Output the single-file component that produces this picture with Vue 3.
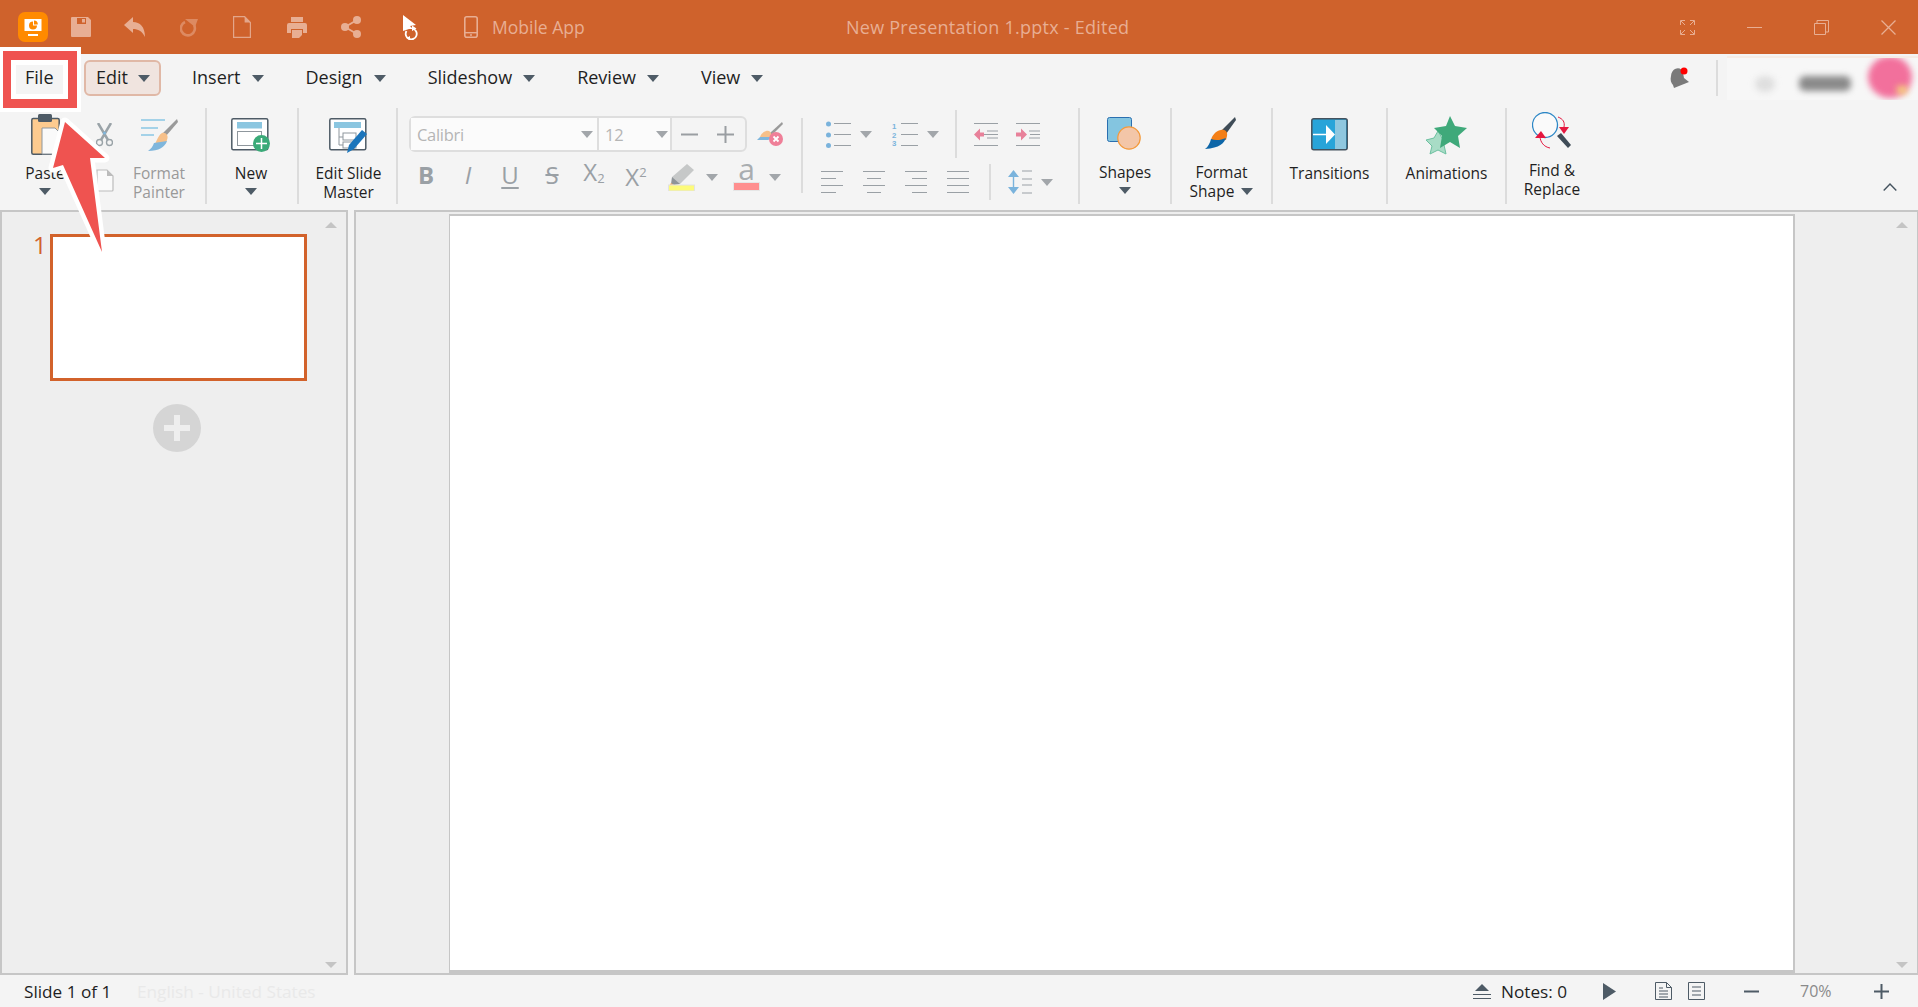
<script setup>
const menus = ['Insert', 'Design', 'Slideshow', 'Review', 'View'];
const aligns = [
  'M0 .5h22M0 7.5h15M0 14.5h22M0 21.5h15',
  'M0 .5h22M4 7.5h14M0 14.5h22M4 21.5h14',
  'M0 .5h22M7 7.5h15M0 14.5h22M7 21.5h15',
  'M0 .5h22M0 7.5h22M0 14.5h22M0 21.5h22'
];
</script>

<template>
  <div class="app">
    <!-- title bar -->
    <header class="titlebar">
      <svg class="t-logo" width="30" height="30" viewBox="0 0 30 30">
        <rect width="30" height="30" rx="7" fill="#ff8a00"/>
        <rect x="6.5" y="7" width="17" height="12" fill="#fff"/>
        <path d="M15 9.5v4h4a4 4 0 1 1-4-4z" fill="#ff8a00"/>
        <path d="M16 8.5a4 4 0 0 1 3.800 4H16z" fill="#ff8a00"/>
        <rect x="10" y="22" width="10" height="2" fill="#fff"/>
      </svg>
      <svg class="t-save" width="20" height="20" viewBox="0 0 20 20">
        <path fill-rule="evenodd" d="M1 0h16l3 3v16a1 1 0 0 1-1 1H1a1 1 0 0 1-1-1V1a1 1 0 0 1 1-1zm5 1v6h9V1z" fill="#e8ae93"/>
        <rect x="11" y="2" width="3" height="3.5" fill="#e8ae93"/>
      </svg>
      <svg class="t-undo" width="21" height="20" viewBox="0 0 21 20">
        <path d="M0 8l9-8v5c7 0 12 5 12 15-3-6-7-8-12-8v4z" fill="#e8ae93"/>
      </svg>
      <svg class="t-redo" width="18" height="20" viewBox="0 0 18 20">
        <path d="M5 5a7 7 0 1 0 9 3" fill="none" stroke="#dd8a62" stroke-width="2.6"/>
        <path d="M5 2h13l-3 8z" fill="#dd8a62"/>
      </svg>
      <svg class="t-new" width="18" height="22" viewBox="0 0 18 22">
        <path d="M.6.6h11l5.800 6v14.800H.6z" fill="none" stroke="#e3a68a" stroke-width="1.2"/>
        <path d="M11.600.6v6h5.800z" fill="#e3a68a"/>
      </svg>
      <svg class="t-print" width="20" height="21" viewBox="0 0 20 21">
        <path d="M4 0h12v5H4zM2 6h16a2 2 0 0 1 2 2v8h-4v-4H4v4H0V8a2 2 0 0 1 2-2zM5 13h10v5l-3 3H5z" fill="#e8ae93"/>
      </svg>
      <svg class="t-share" width="20" height="22" viewBox="0 0 20 22">
        <path d="M16 4L4 11l12 7" fill="none" stroke="#e8ae93" stroke-width="1.8"/>
        <circle cx="16" cy="4" r="4" fill="#e8ae93"/>
        <circle cx="4" cy="11" r="4" fill="#e8ae93"/>
        <circle cx="16" cy="18" r="4" fill="#e8ae93"/>
      </svg>
      <svg class="t-cursor" width="17" height="25" viewBox="0 0 17 25">
        <path d="M0 0l13 10-6 1 3 3-4 0-6 2z" fill="#fff"/>
        <path d="M3.500 16a5.500 5.500 0 1 0 6-2.500" fill="none" stroke="#fff" stroke-width="1.8"/>
        <path d="M9 10.500l4.500 3-4.500 2.500zM7 25l-3.500-2 3.500-2z" fill="#fff"/>
      </svg>
      <svg class="t-phone" width="14" height="22" viewBox="0 0 14 22">
        <rect x=".8" y=".8" width="12.4" height="20.4" rx="2" fill="none" stroke="#e8ae93" stroke-width="1.6"/>
        <rect x="1" y="16" width="12" height="1.4" fill="#e8ae93"/>
        <circle cx="7" cy="19" r="1" fill="#e8ae93"/>
      </svg>
      <span class="t-mobile">Mobile App</span>
      <span class="t-title">New Presentation 1.pptx - Edited</span>
      <div class="win-btns">
        <svg class="w-full" width="15" height="15" viewBox="0 0 15 15" fill="none" stroke="#e8ae93">
          <path d="M.5 5V.5H5M10 .5h4.500V5M14.500 10v4.500H10M5 14.500H.5V10M1 1l4 4M14 1l-4 4M14 14l-4-4M1 14l4-4"/>
        </svg>
        <svg class="w-min" width="15" height="15" viewBox="0 0 15 15" fill="none" stroke="#e8ae93">
          <path d="M0 7.5h15"/>
        </svg>
        <svg class="w-max" width="15" height="15" viewBox="0 0 15 15" fill="none" stroke="#e8ae93">
          <path d="M.5 3.500h11v11H.5zM3 3V.5h11.500V12H12"/>
        </svg>
        <svg class="w-close" width="15" height="15" viewBox="0 0 15 15" fill="none" stroke="#e8ae93" stroke-width="1.3">
          <path d="M.5.5l14 14M14.500.5l-14 14"/>
        </svg>
      </div>
    </header>

    <!-- menu row -->
    <nav class="menubar">
      <span class="menu-file">File</span>
      <div class="menu-edit">
        <span>Edit</span>
        <i class="caret"></i>
      </div>
      <div v-for="m in menus" :key="m" class="menu-item">
        <span>{{ m }}</span>
        <i class="caret"></i>
      </div>
      <svg class="bell" width="20" height="22" viewBox="0 0 20 22">
        <path d="M5 2c4-2 7 0 8 4l1 5 5 4-15 6-1-3C1 16 0 13 1 9c0-3 2-6 4-7z" fill="#7a7a7a"/>
        <circle cx="14" cy="4" r="3.5" fill="#f00"/>
      </svg>
      <div class="user-sep"></div>
      <div class="user-blur">
        <div class="blur-a"></div>
        <div class="blur-b"></div>
        <div class="blur-avatar"></div>
        <div class="blur-dot"></div>
      </div>
    </nav>

    <!-- ribbon -->
    <section class="ribbon">
      <div class="g-clip">
        <div class="big w-paste">
          <div class="big-ico ico-paste">
            <svg width="29" height="42" viewBox="0 0 29 42">
              <rect x=".8" y="5.5" width="27.4" height="35.7" rx="1.5" fill="#fdcb8f" stroke="#4e5b66" stroke-width="1.5"/>
              <rect x="7" y="1" width="14" height="8" rx="1.5" fill="#4e5b66"/>
              <path d="M11 15h13l4 4v22H11z" fill="#fafafa" stroke="#8f979d"/>
            </svg>
          </div>
          <span class="lbl">Paste</span>
          <i class="caret big-caret"></i>
        </div>
        <div class="small-col">
          <svg class="ico-scissors" width="17" height="24" viewBox="0 0 17 24" fill="none">
            <path d="M2 0l10 17M15 0L5 17" stroke="#9aa3a8" stroke-width="2.5"/>
            <circle cx="3.5" cy="19.5" r="3" stroke="#9aa3a8" stroke-width="1.4"/>
            <circle cx="13.5" cy="19.5" r="3" stroke="#9aa3a8" stroke-width="1.4"/>
            <circle cx="8.5" cy="10" r="1.5" fill="#7fb6dc"/>
          </svg>
          <svg class="ico-copy" width="18" height="23" viewBox="0 0 18 23">
            <path d="M1 1h10l6 6v14a1 1 0 0 1-1 1H1z" fill="#fafafa" stroke="#bcbcbc" stroke-width="1.2"/>
            <path d="M11 1v6h6z" fill="#bcbcbc"/>
          </svg>
        </div>
        <div class="big w-paste muted">
          <div class="big-ico">
            <svg width="37" height="35" viewBox="0 0 37 35">
              <path d="M0 2h24M0 10h17M0 17h13" stroke="#89c6e4" stroke-width="1.5"/>
              <path d="M36 1l-14 14 3 3L37 4z" fill="#9a9a9a"/>
              <path d="M21 15c4-1 7 3 5 7-1 4-6 6-10 6H12c4-3 4-10 9-13z" fill="#f6c08a"/>
              <path d="M13 25l13-2c-2 6-8 10-19 10 3-2 5-5 6-8z" fill="#7fb6dc"/>
            </svg>
          </div>
          <span class="lbl">Format</span>
          <span class="lbl">Painter</span>
        </div>
      </div>
      <div class="rsep"></div>

      <div class="big w-new">
        <div class="big-ico">
          <svg width="40" height="34" viewBox="0 0 40 34">
            <rect x=".8" y=".8" width="36" height="31" rx="1.5" fill="#fff" stroke="#4e5b66" stroke-width="1.5"/>
            <rect x="6" y="4" width="25" height="6.5" fill="#8bc6e0"/>
            <rect x="6.5" y="13.5" width="24" height="14" fill="#fff" stroke="#8f979d"/>
            <circle cx="30.5" cy="25.5" r="8.5" fill="#3aaa78"/>
            <path d="M30.500 20v11M25 25.500h11" stroke="#fff" stroke-width="1.5"/>
          </svg>
        </div>
        <span class="lbl">New</span>
        <i class="caret big-caret"></i>
      </div>
      <div class="rsep"></div>

      <div class="big w-master">
        <div class="big-ico">
          <svg width="39" height="35" viewBox="0 0 39 35">
            <rect x=".8" y=".8" width="36" height="31" rx="1.5" fill="#fff" stroke="#4e5b66" stroke-width="1.5"/>
            <rect x="5" y="4" width="27" height="6" fill="#8bc6e0"/>
            <path d="M10 10v17h4M10 19h4" fill="none" stroke="#8f979d"/>
            <rect x="14" y="15" width="13" height="7" fill="#fff" stroke="#8f979d"/>
            <rect x="14" y="24" width="13" height="6" fill="#fff" stroke="#8f979d"/>
            <path d="M33 12l5 4-13 15-7 4 2-8z" fill="#1b75bb"/>
          </svg>
        </div>
        <span class="lbl">Edit Slide</span>
        <span class="lbl">Master</span>
      </div>
      <div class="rsep"></div>

      <div class="g-font">
        <div class="font-row1">
          <div class="font-box">
            <div class="f-name">
              <span>Calibri</span>
              <i class="caret grey"></i>
            </div>
            <div class="f-size">
              <span>12</span>
              <i class="caret grey"></i>
            </div>
            <div class="f-step">
              <svg width="17" height="17" viewBox="0 0 17 17"><path d="M0 8.500h17" stroke="#9a9ea2" stroke-width="2"/></svg>
              <svg width="17" height="17" viewBox="0 0 17 17"><path d="M0 8.500h17M8.500 0v17" stroke="#9a9ea2" stroke-width="2"/></svg>
            </div>
          </div>
          <svg class="ico-clear" width="26" height="24" viewBox="0 0 26 24">
            <path d="M25 0L13 11l2 2L26 2z" fill="#9a9a9a"/>
            <path d="M9 9c4-1 6 2 5 6H3c1-3 3-5 6-6z" fill="#f6c08a"/>
            <path d="M3 15h11c-1 2-2 3-3 3H0c1-1 2-2 3-3z" fill="#7fb6dc"/>
            <circle cx="19" cy="17" r="7" fill="#ef7f98"/>
            <path d="M16.500 14.500l5 5M21.500 14.500l-5 5" stroke="#fff" stroke-width="1.8"/>
          </svg>
        </div>
        <div class="font-row2">
          <span class="fmt bold">B</span>
          <span class="fmt ital">I</span>
          <span class="fmt under">U</span>
          <span class="fmt strike">S</span>
          <span class="fmt">X<small class="sub">2</small></span>
          <span class="fmt">X<small class="sup">2</small></span>
          <svg class="ico-hl" width="27" height="27" viewBox="0 0 27 27">
            <path d="M19 0l7 6-14 14-8 0 0-7z" fill="#c6c8c8"/>
            <path d="M4 13l8 7-6 1-3-1z" fill="#8e9498"/>
            <path d="M3 19l3 2-5 1z" fill="#f6b26b"/>
            <rect x=".5" y="21" width="26" height="6" fill="#fdfb7a" stroke="#e2e2e2"/>
          </svg>
          <i class="caret grey c-hl"></i>
          <span class="font-a">
            <span class="font-a-ch">a</span>
            <i class="font-a-bar"></i>
          </span>
          <i class="caret grey c-a"></i>
        </div>
      </div>
      <div class="rsep short"></div>

      <div class="g-para">
        <div class="para-row1">
          <svg class="ico-bul" width="25" height="27" viewBox="0 0 25 27">
            <g fill="#7ab3dc"><circle cx="2.5" cy="3" r="2.5"/><circle cx="2.5" cy="14" r="2.5"/><circle cx="2.5" cy="24.500" r="2.5"/></g>
            <path d="M8 2.500h17M8 13.500h17M8 24.500h17" stroke="#9aa0a5" stroke-width="1.2"/>
          </svg>
          <i class="caret grey c-list"></i>
          <svg class="ico-num" width="26" height="27" viewBox="0 0 26 27">
            <g fill="#7ab3dc" font-family="Liberation Sans, sans-serif" font-size="7.8" font-weight="700">
              <text x="0" y="7.5">1</text><text x="0" y="16.6">2</text><text x="0" y="25.2">3</text>
            </g>
            <path d="M9 2.500h17M9 13.500h17M9 24.500h17" stroke="#9aa0a5" stroke-width="1.2"/>
          </svg>
          <i class="caret grey c-list"></i>
          <div class="psep s1"></div>
          <svg class="ico-ind1" width="24" height="23" viewBox="0 0 24 23">
            <path d="M0 .5h24M13 8h11M9 11.500h15M13 15h11M0 22.500h24" stroke="#9aa0a5" stroke-width="1.2" fill="none"/>
            <path d="M0 11.500l6-6v4h4v4H6v4z" fill="#e8819a"/>
          </svg>
          <svg class="ico-ind2" width="24" height="23" viewBox="0 0 24 23">
            <path d="M0 .5h24M13 8h11M13 15h11M0 22.500h24M14 11.500h10" stroke="#9aa0a5" stroke-width="1.2" fill="none"/>
            <path d="M11 11.500l-6-6v4H0v4h5v4z" fill="#e8819a"/>
          </svg>
        </div>
        <div class="para-row2">
          <svg v-for="(d, i) in aligns" :key="i" class="ico-al" width="22" height="22" viewBox="0 0 22 22">
            <path :d="d" stroke="#9aa0a5" stroke-width="1.2"/>
          </svg>
          <div class="psep s2"></div>
          <svg class="ico-sp" width="24" height="24" viewBox="0 0 24 24">
            <path d="M5.500 4v16" stroke="#7ab3dc" stroke-width="1.4"/>
            <path d="M0 7l5.500-7L11 7zM0 17l5.500 7L11 17z" fill="#7ab3dc"/>
            <path d="M14 1h10M14 9h10M14 15h10M14 23h10" stroke="#9aa0a5" stroke-width="1.2"/>
          </svg>
          <i class="caret grey c-list"></i>
        </div>
      </div>
      <div class="rsep"></div>

      <div class="big w-shapes">
        <div class="big-ico ico-shapes">
          <svg width="34" height="33" viewBox="0 0 34 33">
            <rect x=".5" y=".5" width="24" height="24" rx="2" fill="#84c5e0" stroke="#2a6fb0"/>
            <circle cx="22" cy="21" r="11.2" fill="#f3c6a8" stroke="#f39a3c" stroke-width="1.2"/>
          </svg>
        </div>
        <span class="lbl">Shapes</span>
        <i class="caret big-caret"></i>
      </div>
      <div class="rsep"></div>

      <div class="big w-format">
        <div class="big-ico ico-shapes">
          <svg width="31" height="32" viewBox="0 0 31 32">
            <path d="M30 0l-13 13 4 4L31 3z" fill="#3f4c57"/>
            <path d="M16 13c4-1 7 2 6 6l-1 4-15 1c0-4 4-10 10-11z" fill="#f47f16"/>
            <path d="M6 22c5 2 10 1 15-1-2 5-6 10-21 11 3-2 5-6 6-10z" fill="#0d66a8"/>
          </svg>
        </div>
        <span class="lbl">Format</span>
        <div class="lbl-row">
          <span class="lbl">Shape</span>
          <i class="caret"></i>
        </div>
      </div>
      <div class="rsep"></div>

      <div class="big w-trans">
        <div class="big-ico">
          <svg width="37" height="33" viewBox="0 0 37 33">
            <rect x=".8" y=".8" width="35.4" height="31" rx="2" fill="#28a4d9" stroke="#44525e" stroke-width="1.5"/>
            <rect x="24" y="2" width="11" height="29" fill="#8fc7df"/>
            <path d="M2 16.500h14" stroke="#fff" stroke-width="1.5"/>
            <path d="M15 7l9 9.500L15 26z" fill="#fff"/>
          </svg>
        </div>
        <span class="lbl">Transitions</span>
      </div>
      <div class="rsep"></div>

      <div class="big w-anim">
        <div class="big-ico ico-anim">
          <svg width="41" height="40" viewBox="0 0 41 40">
            <path d="M12 15l4 7 8 1-6 6 2 9-8-4-8 4 2-8-6-6 8-2z" fill="#a8dcc6" stroke="#6cc0a0"/>
            <path d="M24 0l5 10 12 2-9 8 2 12-10-6-10 6 2-12-8-8 12-2z" fill="#3fa97a"/>
          </svg>
        </div>
        <span class="lbl">Animations</span>
      </div>
      <div class="rsep"></div>

      <div class="big w-find">
        <div class="big-ico ico-find">
          <svg width="41" height="37" viewBox="0 0 41 37">
            <circle cx="13" cy="13" r="12.5" fill="#fafafa" stroke="#2d87c6" stroke-width="1.3"/>
            <path d="M25 24l4-3 10 12-3 3z" fill="#3f4c57"/>
            <path d="M26 5c5 2 7 5 6 10" fill="none" stroke="#e5173f"/>
            <path d="M27 15h10l-5 7z" fill="#e5173f"/>
            <path d="M8 24c0 6 4 11 10 12" fill="none" stroke="#e5173f"/>
            <path d="M3 26l6-7 5 7z" fill="#e5173f"/>
          </svg>
        </div>
        <span class="lbl">Find &amp;</span>
        <span class="lbl">Replace</span>
      </div>

      <svg class="collapse" width="14" height="8" viewBox="0 0 14 8">
        <path d="M.7 7.500L7 1l6.300 6.500" fill="none" stroke="#44525e" stroke-width="1.4"/>
      </svg>
    </section>

    <!-- slide panes -->
    <main class="panes">
      <aside class="thumbs">
        <i class="scr-up"></i>
        <div class="thumb-row">
          <span class="thumb-no">1</span>
          <div class="thumb"></div>
        </div>
        <div class="add-slide">
          <svg width="26" height="26" viewBox="0 0 26 26">
            <path d="M10 0h6v10h10v6H16v10h-6V16H0v-6h10z" fill="#eee"/>
          </svg>
        </div>
        <i class="scr-down"></i>
      </aside>
      <section class="stage">
        <i class="scr-up"></i>
        <div class="page"></div>
        <i class="scr-down"></i>
      </section>
    </main>

    <!-- status bar -->
    <footer class="statusbar">
      <span class="s-slide">Slide 1 of 1</span>
      <span class="s-lang">English - United States</span>
      <svg class="s-eject" width="18" height="15" viewBox="0 0 18 15">
        <path d="M9 0l7 7H2z" fill="#4e5b66"/>
        <path d="M0 10.500h18M0 14.500h18" stroke="#4e5b66"/>
      </svg>
      <span class="s-notes">Notes: 0</span>
      <svg class="s-play" width="13" height="17" viewBox="0 0 13 17">
        <path d="M0 0l13 8.500L0 17z" fill="#4e5b66"/>
      </svg>
      <svg class="s-doc" width="17" height="18" viewBox="0 0 17 18" fill="none" stroke="#4e5b66">
        <path d="M.5.500h11l5 5v12H.5zM11.500.5v5h5M4 9h9M4 12h9M4 15h9M4 6h4"/>
      </svg>
      <svg class="s-doc2" width="17" height="18" viewBox="0 0 17 18" fill="none" stroke="#4e5b66">
        <path d="M.5.500h16v17H.5zM4 5h9M4 9h9M4 13h9"/>
      </svg>
      <svg class="s-minus" width="15" height="15" viewBox="0 0 15 15">
        <path d="M0 7.500h15" stroke="#4e5b66" stroke-width="2"/>
      </svg>
      <span class="s-zoom">70%</span>
      <svg class="s-plus" width="15" height="15" viewBox="0 0 15 15">
        <path d="M0 7.500h15M7.500 0v15" stroke="#4e5b66" stroke-width="2"/>
      </svg>
    </footer>

    <!-- annotation over the screenshot -->
    <div class="file-mark">
      <div class="file-mark-red">
        <div class="file-mark-white"></div>
      </div>
    </div>
    <svg class="arrow" width="125" height="160" viewBox="0 0 125 160">
      <path d="M25 14L65 50H50L62 144 23 57 13 60z" fill="#ef5350" stroke="#fff" stroke-width="9" stroke-linejoin="round" paint-order="stroke"/>
    </svg>
  </div>
</template>

<style>
html, body {
  margin: 0;
  background: #f4f4f4;
}
</style>

<style scoped>
.app {
  position: relative;
  width: 1918px;
  height: 1007px;
  display: flex;
  flex-direction: column;
  overflow: hidden;
  background: #f4f4f4;
  color: #1f1f1f;
  font-family: "Open Sans", "Noto Sans", sans-serif;
  font-size: 15px;
}

svg {
  display: block;
  flex: none;
}

.caret {
  display: block;
  flex: none;
  width: 0;
  height: 0;
  border-left: 6px solid transparent;
  border-right: 6px solid transparent;
  border-top: 7px solid #4e5b66;
}

.caret.grey {
  border-top-color: #a2a6aa;
}

/* title bar */
.titlebar {
  height: 54px;
  flex: none;
  display: flex;
  align-items: center;
  padding-left: 18px;
  background: #cf622c;
  color: #e8ae93;
}

.t-save { margin-left: 23px; }
.t-undo { margin-left: 33px; }
.t-redo { margin-left: 35px; }
.t-new { margin-left: 35px; }
.t-print { margin-left: 36px; }
.t-share { margin-left: 34px; }
.t-cursor { margin-left: 42px; }
.t-phone { margin-left: 44px; }

.t-mobile {
  margin-left: 14px;
  width: 354px;
  font-size: 17.5px;
}

.t-title {
  font-size: 18px;
  letter-spacing: 0.25px;
  white-space: nowrap;
}

.win-btns {
  margin-left: auto;
  display: flex;
  padding-right: 22px;
  gap: 52px;
}

/* menu row */
.menubar {
  height: 54px;
  flex: none;
  box-sizing: border-box;
  padding-bottom: 6px;
  display: flex;
  align-items: center;
  font-size: 18px;
}

.menubar span {
  padding-bottom: 2px;
}

.menu-file {
  width: 84px;
  padding-left: 25px;
  box-sizing: border-box;
}

.menu-edit {
  width: 77px;
  height: 36px;
  box-sizing: border-box;
  display: flex;
  align-items: center;
  gap: 10px;
  padding-left: 10px;
  background: #f0e4df;
  border: 2px solid #e0b8a6;
  border-radius: 6px;
}

.menu-item {
  display: flex;
  align-items: center;
  gap: 11px;
  margin-left: 42px;
}

.menu-edit + .menu-item {
  margin-left: 31px;
}

.bell {
  margin-left: auto;
}

.user-sep {
  width: 2px;
  height: 36px;
  margin-left: 26px;
  background: #dcdcdc;
}

.user-blur {
  position: relative;
  width: 191px;
  height: 42px;
  margin-left: 9px;
  overflow: hidden;
  background: #f7f7f7;
  border-top: 2px solid #f5ece6;
}

.blur-a,
.blur-b,
.blur-avatar,
.blur-dot {
  position: absolute;
  filter: blur(3px);
}

.blur-a {
  left: 28px;
  top: 18px;
  width: 20px;
  height: 16px;
  border-radius: 50%;
  background: #dedede;
}

.blur-b {
  left: 72px;
  top: 18px;
  width: 52px;
  height: 15px;
  border-radius: 6px;
  background: #8a8a8a;
}

.blur-avatar {
  left: 141px;
  top: -2px;
  width: 44px;
  height: 42px;
  border-radius: 50%;
  background: #f2709c;
}

.blur-dot {
  left: 170px;
  top: 28px;
  width: 10px;
  height: 8px;
  background: #f4d27a;
}

/* ribbon */
.ribbon {
  height: 102px;
  flex: none;
  display: flex;
  position: relative;
}

.rsep {
  width: 2px;
  height: 96px;
  flex: none;
  background: #dcdcdc;
}

.rsep.short {
  height: 75px;
  margin-top: 10px;
}

.big {
  flex: none;
  display: flex;
  flex-direction: column;
  align-items: center;
  box-sizing: border-box;
}

.big-ico {
  height: 56px;
  padding-top: 10px;
  box-sizing: border-box;
}

.ico-paste { padding-top: 5px; }

.ico-shapes {
  height: 55px;
  padding-top: 9px;
  padding-right: 3px;
}

.ico-anim { padding-top: 8px; }

.ico-find {
  height: 53px;
  padding-top: 4px;
}

.lbl {
  display: block;
  font-size: 15.5px;
  line-height: 19px;
  white-space: nowrap;
}

.lbl-row {
  display: flex;
  align-items: center;
  gap: 7px;
}

.big-caret {
  margin-top: 5px;
}

.muted .lbl {
  color: #999;
}

.g-clip {
  width: 205px;
  flex: none;
  display: flex;
  padding-left: 15px;
  box-sizing: border-box;
}

.w-paste { width: 60px; }
.w-new { width: 90px; padding-right: 2px; }
.w-master { width: 97px; padding-left: 2px; }
.w-shapes { width: 90px; }
.w-format { width: 99px; }
.w-trans { width: 113px; }
.w-anim { width: 117px; }
.w-find { width: 90px; }

.small-col {
  width: 54px;
  padding-left: 21px;
  padding-top: 15px;
  box-sizing: border-box;
}

.ico-copy {
  margin-top: 22px;
}

/* font group */
.g-font {
  width: 403px;
  flex: none;
  padding: 8px 0 0 11px;
  box-sizing: border-box;
}

.font-row1 {
  display: flex;
  align-items: center;
}

.font-box {
  width: 338px;
  height: 36px;
  box-sizing: border-box;
  display: flex;
  border: 2px solid #dedede;
  border-radius: 6px;
  color: #b5b5b5;
  font-size: 16.5px;
  letter-spacing: -0.3px;
}

.f-name,
.f-size {
  display: flex;
  align-items: center;
  justify-content: space-between;
  box-sizing: border-box;
  background: #fbfbfb;
  border-right: 2px solid #dedede;
}

.f-name {
  width: 188px;
  padding: 0 4px 0 6px;
}

.f-size {
  width: 73px;
  padding: 0 2px 0 6px;
}

.f-step {
  flex: 1;
  display: flex;
  align-items: center;
  justify-content: space-between;
  padding: 0 11px 0 9px;
}

.ico-clear {
  margin-left: 10px;
}

.font-row2 {
  display: flex;
  align-items: center;
  height: 26px;
  margin: 12px 0 0 -4px;
}

.fmt {
  width: 42px;
  padding-bottom: 5px;
  text-align: center;
  color: #9aa0a5;
  font-size: 24px;
  line-height: 26px;
  white-space: nowrap;
}

.bold { font-weight: 700; }
.ital { font-style: italic; }

.under {
  text-decoration: underline;
  text-underline-offset: 3px;
  text-decoration-thickness: 2px;
}

.strike {
  text-decoration: line-through;
  text-decoration-thickness: 1.5px;
}

.sub,
.sup {
  font-size: 13px;
}

.sub {
  vertical-align: -2px;
}

.sup {
  vertical-align: 9px;
}

.ico-hl { margin-left: 11px; }
.c-hl { margin-left: 11px; }
.c-a { margin-left: 9px; }

.font-a {
  width: 27px;
  margin-left: 15px;
  display: block;
  text-align: center;
}

.font-a-ch {
  display: block;
  height: 20px;
  margin-top: -6px;
  color: #a9adb0;
  font-size: 30px;
  line-height: 24px;
}

.font-a-bar {
  display: block;
  height: 7px;
  margin-top: 5px;
  background: #ff8f8f;
  border: 1px solid #e6e6e6;
}

/* paragraph group */
.g-para {
  width: 275px;
  flex: none;
  padding-top: 2px;
  box-sizing: border-box;
}

.para-row1 {
  height: 48px;
  display: flex;
  align-items: center;
  padding-left: 23px;
}

.para-row2 {
  height: 36px;
  display: flex;
  align-items: center;
  margin-top: 6px;
  padding-left: 18px;
}

.c-list { margin-left: 9px; }
.ico-num { margin-left: 20px; }

.psep {
  width: 2px;
  background: #dcdcdc;
}

.psep.s1 {
  height: 48px;
  margin-left: 16px;
}

.psep.s2 {
  height: 36px;
  margin-left: 20px;
}

.ico-ind1 { margin-left: 17px; }
.ico-ind2 { margin-left: 18px; }
.ico-al + .ico-al { margin-left: 20px; }
.ico-sp { margin-left: 17px; }

.collapse {
  position: absolute;
  left: 1883px;
  top: 75px;
}

/* panes */
.panes {
  flex: 1;
  min-height: 0;
  display: flex;
  gap: 6px;
}

.thumbs,
.stage {
  position: relative;
  box-sizing: border-box;
  border: 2px solid #c6c6c6;
  background: #eee;
}

.thumbs {
  width: 348px;
  flex: none;
}

.thumb-row {
  display: flex;
  align-items: flex-start;
  margin-top: 22px;
  padding-left: 31px;
}

.thumb-no {
  width: 17px;
  color: #d2622b;
  font-size: 24px;
  line-height: 22px;
}

.thumb {
  width: 257px;
  height: 147px;
  box-sizing: border-box;
  background: #fff;
  border: 3px solid #d2622b;
}

.add-slide {
  width: 48px;
  height: 48px;
  margin: 23px 0 0 151px;
  display: flex;
  align-items: center;
  justify-content: center;
  border-radius: 50%;
  background: #d5d5d5;
}

.scr-up,
.scr-down {
  position: absolute;
  right: 9px;
  width: 0;
  height: 0;
  border-left: 6px solid transparent;
  border-right: 6px solid transparent;
}

.scr-up {
  top: 10px;
  border-bottom: 6px solid #c4c4c4;
}

.scr-down {
  bottom: 5px;
  border-top: 6px solid #c4c4c4;
}

.stage {
  flex: 1;
  min-width: 0;
  padding: 2px 0 0 93px;
  border-right-width: 1px;
}

.page {
  width: 1346px;
  height: 100%;
  box-sizing: border-box;
  background: #fff;
  border: 2px solid #c6c6c6;
  border-left-width: 1px;
  border-bottom-width: 3px;
}

/* status bar */
.statusbar {
  height: 32px;
  flex: none;
  display: flex;
  align-items: center;
  padding-left: 24px;
  font-size: 17.2px;
}

.s-slide { width: 113px; }

.s-lang {
  width: 1336px;
  color: #e9e9e9;
  white-space: nowrap;
}

.s-notes {
  width: 102px;
  margin-left: 10px;
}

.s-doc { margin-left: 39px; }
.s-doc2 { margin-left: 16px; }
.s-minus { margin-left: 39px; }

.s-zoom {
  width: 33px;
  margin-left: 41px;
  color: #8a8a8a;
  font-size: 16px;
}

.s-plus { margin-left: 41px; }

/* red annotation */
.file-mark {
  position: absolute;
  left: 0;
  top: 47px;
  width: 81px;
  height: 65px;
  box-sizing: border-box;
  border: solid #fff;
  border-width: 4px 4px 4px 3px;
}

.file-mark-red {
  height: 100%;
  box-sizing: border-box;
  border: solid #ef5350;
  border-width: 9px 9px 9px 8px;
}

.file-mark-white {
  height: 100%;
  box-sizing: border-box;
  border: 5px solid #fff;
}

.arrow {
  position: absolute;
  left: 40px;
  top: 108px;
}
</style>
